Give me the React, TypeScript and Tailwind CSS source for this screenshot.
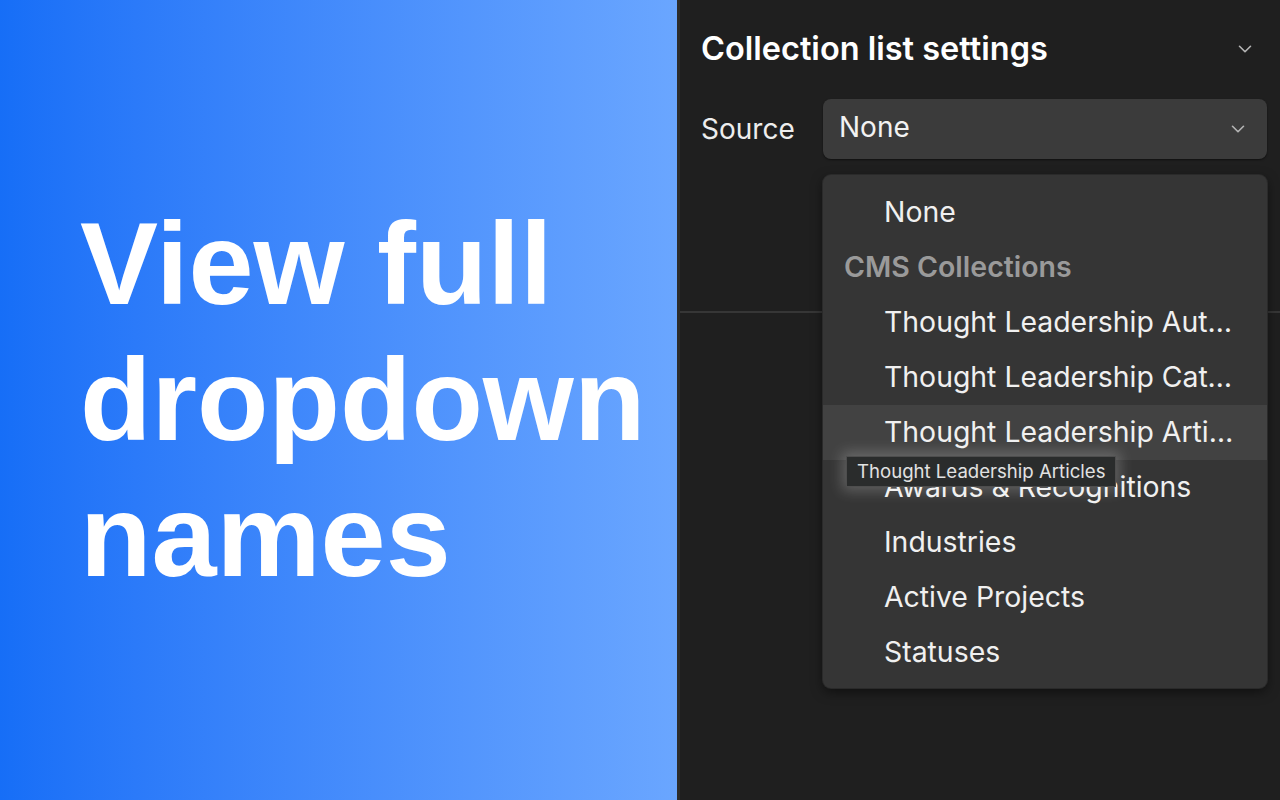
import { ChevronDown } from "lucide-react";

const items = [
  { label: "None", kind: "item" },
  { label: "CMS Collections", kind: "group" },
  { label: "Thought Leadership Authors", kind: "item" },
  { label: "Thought Leadership Categories", kind: "item" },
  { label: "Thought Leadership Articles", kind: "item", hover: true },
  { label: "Awards & Recognitions", kind: "item" },
  { label: "Industries", kind: "item" },
  { label: "Active Projects", kind: "item" },
  { label: "Statuses", kind: "item" },
];

function Dropdown() {
  return (
    <div className="w-[444px] rounded-lg bg-[#353535] pt-[10px] pb-[8px] shadow-[0_4px_12px_rgba(0,0,0,0.5)] ring-1 ring-[#2a2a2a]">
      {items.map((item) =>
        item.kind === "group" ? (
          <div
            key={item.label}
            className="flex h-[55px] items-center pl-[21px] text-[28.5px] font-semibold text-[#9a9a9a]"
          >
            {item.label}
          </div>
        ) : (
          <div
            key={item.label}
            className={`relative flex h-[55px] items-center pl-[61px] pr-[32px] text-[28.4px] text-[#f0f0f0] ${
              item.hover ? "bg-[#424242]" : ""
            }`}
          >
            <span className="truncate">{item.label}</span>
            {item.hover && (
              <div className="absolute left-[23px] top-[51px] z-10 whitespace-nowrap border border-[#4e4e4e] bg-[#2a2c2c] px-[10px] py-[3px] text-[18.6px] leading-[23px] text-[#e2e2e2] shadow-[0_0_14px_4px_rgba(255,255,255,0.22)]">
                {item.label}
              </div>
            )}
          </div>
        )
      )}
    </div>
  );
}

export default function App() {
  return (
    <div className="flex h-[800px] w-[1280px] overflow-hidden font-['Inter',sans-serif]">
      <div className="flex w-[677px] items-center bg-gradient-to-r from-[#166ef7] to-[#6aa6ff] pl-[80px]">
        <h1 className="font-['Liberation_Sans',Arial,sans-serif] text-[117px] font-bold leading-[136px] text-white">
          View full
          <br />
          dropdown
          <br />
          names
        </h1>
      </div>
      <div className="flex flex-1 flex-col border-l-[3px] border-[#2c2c2c] bg-[#1f1f1f]">
        <div className="h-[313px] border-b-2 border-[#363636]">
          <div className="flex h-[96px] items-center justify-between pl-[21px] pr-[24px] pt-[2px]">
            <h2 className="text-[32.5px] font-semibold text-white">Collection list settings</h2>
            <ChevronDown className="h-[22px] w-[22px] text-[#b5b5b5]" strokeWidth={1.75} />
          </div>
          <div className="mt-[3px] flex items-start pl-[21px] pr-[13px]">
            <span className="mt-[9px] w-[122px] text-[28px] text-[#ededed]">Source</span>
            <div className="relative">
              <div className="flex h-[60px] w-[444px] items-center justify-between rounded-lg bg-[#3b3b3b] pb-[4px] pl-[16px] pr-[18px] shadow-[0_1px_2px_rgba(0,0,0,0.5)]">
                <span className="text-[28px] text-[#f2f2f2]">None</span>
                <ChevronDown className="mt-[4px] h-[22px] w-[22px] text-[#b5b5b5]" strokeWidth={1.75} />
              </div>
              <div className="absolute left-0 top-[76px] z-10">
                <Dropdown />
              </div>
            </div>
          </div>
        </div>
      </div>
    </div>
  );
}
